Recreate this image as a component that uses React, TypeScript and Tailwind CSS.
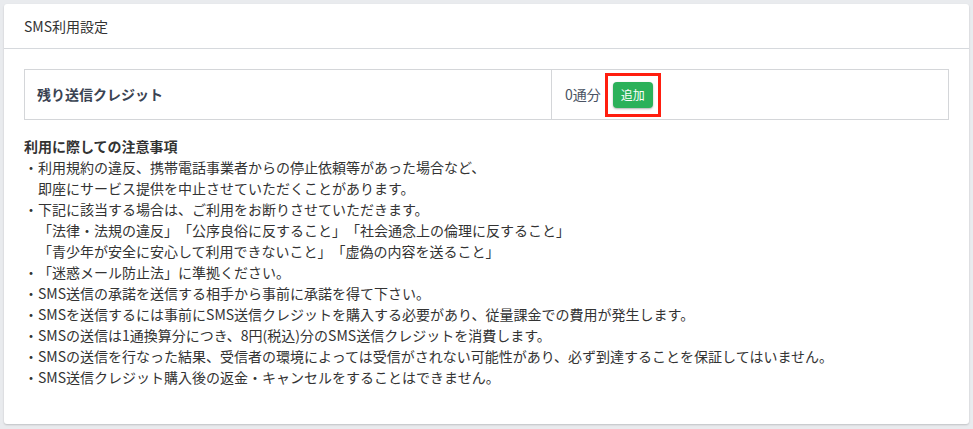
import React from 'react';

const notes: { text: string; indent?: boolean }[] = [
  { text: '・利用規約の違反、携帯電話事業者からの停止依頼等があった場合など、' },
  { text: '即座にサービス提供を中止させていただくことがあります。', indent: true },
  { text: '・下記に該当する場合は、ご利用をお断りさせていただきます。' },
  { text: '「法律・法規の違反」「公序良俗に反すること」「社会通念上の倫理に反すること」', indent: true },
  { text: '「青少年が安全に安心して利用できないこと」「虚偽の内容を送ること」', indent: true },
  { text: '・「迷惑メール防止法」に準拠ください。' },
  { text: '・SMS送信の承諾を送信する相手から事前に承諾を得て下さい。' },
  { text: '・SMSを送信するには事前にSMS送信クレジットを購入する必要があり、従量課金での費用が発生します。' },
  { text: '・SMSの送信は1通換算分につき、8円(税込)分のSMS送信クレジットを消費します。' },
  { text: '・SMSの送信を行なった結果、受信者の環境によっては受信がされない可能性があり、必ず到達することを保証してはいません。' },
  { text: '・SMS送信クレジット購入後の返金・キャンセルをすることはできません。' },
];

export default function App() {
  return (
    <div
      className="min-h-screen bg-[#e9ebee] p-1 text-[14px] text-[#333] [text-spacing-trim:space-all]"
      style={{ fontFamily: '"Noto Sans CJK JP", "Noto Sans", sans-serif' }}
    >
      <div className="h-[420px] rounded-[3px] bg-white shadow-[0_1px_2px_rgba(0,0,0,0.18)]">
        <div className="flex h-[45px] items-center border-b border-[#d6d9dd] px-5 leading-none">
          SMS利用設定
        </div>

        <div className="px-5 pt-5">
          <div className="flex h-[51px] border border-[#d4d6d9]">
            <div className="flex w-[527px] items-center border-r border-[#d4d6d9] px-3 font-bold text-[#3a4352]">
              残り送信クレジット
            </div>
            <div className="flex flex-1 items-center px-[13px] text-[#4a5363]">
              <span>0通分</span>
              <span className="relative ml-3 inline-flex">
                <button className="h-[26px] w-[40px] rounded-[4px] bg-[#2bb15a] text-[12px] text-white shadow-[0_1px_2px_rgba(0,0,0,0.3)]">
                  追加
                </button>
                <span className="absolute left-[-8px] top-[-9px] h-[44px] w-[56px] border-[3px] border-[#ff1e0f]" />
              </span>
            </div>
          </div>

          <div className="mt-4 leading-[21px]">
            <div className="font-bold">利用に際しての注意事項</div>
            {notes.map((n, i) => (
              <div key={i} className={n.indent ? 'pl-[14px]' : ''}>
                {n.text}
              </div>
            ))}
          </div>
        </div>
      </div>
    </div>
  );
}
